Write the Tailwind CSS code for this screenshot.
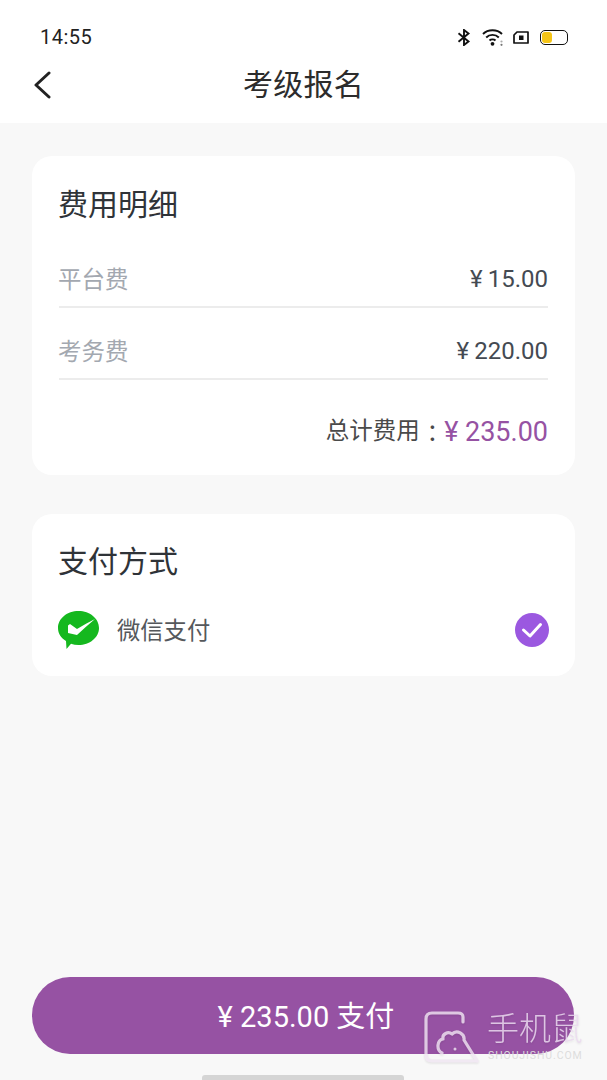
<!DOCTYPE html>
<html lang="zh">
<head>
<meta charset="utf-8">
<script src="https://cdn.jsdelivr.net/npm/@tailwindcss/browser@4"></script>
</head>
<body class="bg-[#f8f8f8]">
<div class="relative w-[607px] h-[1080px] overflow-hidden bg-[#f8f8f8] font-['Roboto','Noto_Sans_CJK_SC',sans-serif]">
  <header class="bg-white h-[123px] flex flex-col">
    <div class="h-[55px] pt-[25px] pl-[40px] pr-[39px] flex items-start justify-between">
      <span class="text-[20px] leading-[24px] tracking-[0.5px] text-[#222]">14:55</span>
      <div class="flex items-center h-[24px] pt-[1px]">
        <svg class="w-[14px] h-[17px]" viewBox="0 0 14 17" fill="none" stroke="#111" stroke-width="1.900"><path d="M1.500 4.200 L11.500 12.500 L7 16 V1 L11.500 4.500 L1.500 12.800"/></svg>
        <svg class="w-[22px] h-[17px] ml-[11px]" viewBox="0 0 22 17" fill="none" stroke="#111" stroke-width="1.900"><path d="M1 5 C6 0 15 0 20 5"/><path d="M4.200 8.500 C7.500 5 13.500 5 16.800 8.500"/><path d="M7.500 11.500 C9 10 12 10 13.500 11.500"/><circle cx="10.500" cy="14.800" r="1.900" fill="#111" stroke="none"/><circle cx="19.500" cy="12.500" r="1.100" fill="#aaa" stroke="none"/><circle cx="19.500" cy="15.800" r="1.100" fill="#777" stroke="none"/></svg>
        <svg class="w-[16px] h-[13px] ml-[9px]" viewBox="0 0 16 13" fill="none"><path d="M4 1 H15 V12 H1 V4 Z" stroke="#111" stroke-width="1.700" stroke-linejoin="round"/><rect x="6" y="4.500" width="4.500" height="4.500" fill="#111"/></svg>
        <div class="w-[28px] h-[15px] rounded-[5px] border-[1.800px] border-[#111] p-[1px] ml-[11px]"><div class="w-[10px] h-full rounded-[3px] bg-[#f5c518]"></div></div>
      </div>
    </div>
    <div class="relative h-[60px] flex items-center justify-center">
      <svg class="absolute left-[33px] top-[16px] w-[18px] h-[28px]" viewBox="0 0 18 28" fill="none" stroke="#222" stroke-width="3" stroke-linecap="round" stroke-linejoin="round"><path d="M16 2 L3 14 L16 26"/></svg>
      <h1 class="text-[30px] leading-[40px] tracking-[0.2px] text-[#2c2c2c] font-normal">考级报名</h1>
    </div>
  </header>

  <main class="px-[32px] pt-[33px] flex flex-col gap-[39px]">
    <section class="bg-white rounded-[20px] h-[319px] px-[27px] pt-[29px]">
      <h2 class="text-[30px] leading-[40px] font-normal text-[#2f3338] -ml-[1px]">费用明细</h2>
      <div class="mt-[30px] h-[53px] flex items-center justify-between border-b-2 border-[#ececec]">
        <span class="text-[23.500px] text-[#a3a8b0] -ml-[1px]">平台费</span>
        <span class="text-[24px] text-[#444a52] pb-[4px] pl-[1px]">¥<span class="ml-[5px]">15.00</span></span>
      </div>
      <div class="mt-[19px] h-[53px] flex items-center justify-between border-b-2 border-[#ececec]">
        <span class="text-[23.500px] text-[#a3a8b0] -ml-[1px]">考务费</span>
        <span class="text-[24px] text-[#444a52] pb-[4px] pl-[1px]">¥<span class="ml-[5px]">220.00</span></span>
      </div>
      <div class="mt-[32px] flex items-center justify-end h-[40px]">
        <span class="text-[23.500px] text-[#4a4a4a] mr-[1px]">总计费用</span><span class="text-[23.300px] text-[#4a4a4a] font-['Noto_Sans_CJK_TC']">：</span><span class="text-[27px] text-[#9652a3]">¥ 235.00</span>
      </div>
    </section>
    <section class="bg-white rounded-[20px] h-[162px] px-[27px] pt-[28px]">
      <h2 class="text-[30px] leading-[40px] font-normal text-[#2f3338] -ml-[1px]">支付方式</h2>
      <div class="mt-[27px] flex items-center justify-between h-[42px]">
        <div class="flex items-center gap-[18px]">
          <svg class="w-[41px] h-[38px] -ml-[1px]" viewBox="0 0 41 38"><path d="M20.500 0 C31.800 0 41 7.500 41 17 C41 26.500 31.800 34 20.500 34 C17.800 34 15.300 33.600 13 32.800 L8.500 38 L8 30 C3 27 0 22.500 0 17 C0 7.500 9.200 0 20.500 0 Z" fill="#15b81f"/><path d="M10 14.500 L12 13 L19 18 C25 14.500 31 11 37 8 C31 13 25 18.500 19 24 L10 22 Z" fill="#fff"/></svg>
          <span class="text-[23.300px] text-[#55585c] pt-[3px]">微信支付</span>
        </div>
        <div class="w-[34px] h-[34px] rounded-full bg-[#9b58e0] flex items-center justify-center -mr-[1px]">
          <svg class="w-[24px] h-[24px]" viewBox="0 0 24 24" fill="none" stroke="#fff" stroke-width="3" stroke-linecap="round" stroke-linejoin="round"><path d="M3.500 12 L10 18 L20.500 6.500"/></svg>
        </div>
      </div>
    </section>
  </main>

  <button class="absolute left-[32px] top-[977px] w-[542px] h-[77px] rounded-[38px] bg-[#9652a3] text-white text-[29px] pt-[4px] pl-[6px] flex items-center justify-center">¥ 235.00 支付</button>
  <div class="absolute left-[202px] top-[1075px] w-[202px] h-[5px] rounded-t-[3px] bg-[#d5d5d5]"></div>

  <div class="absolute left-[424px] top-[1010px] w-[56px] h-[54px] opacity-80 drop-shadow-[0_1px_1px_rgba(0,0,0,0.12)]">
    <svg class="w-full h-full" viewBox="0 0 56 54" fill="none" stroke="#f0e6f2" stroke-width="3.200" stroke-linecap="round" stroke-linejoin="round"><path d="M39 12 V7 Q39 3 34 3 H8 Q2 3 2 9 V45 Q2 51 8 51 H53"/><path d="M53 51 L40 30 C41 24 33 19 28 24 C24 21 18 24 19 29 C13 30 12 40 18 43"/><circle cx="31" cy="39" r="1.500" fill="#f0e6f2" stroke="none"/></svg>
  </div>
  <div class="absolute left-[487px] top-[1010px] text-[32px] leading-[38px] text-[#ead9ee]/85 whitespace-nowrap font-light drop-shadow-[0_1px_1px_rgba(0,0,0,0.1)]">手机鼠</div>
  <div class="absolute left-[488px] top-[1050px] text-[10.500px] leading-[12px] tracking-[0.900px] text-[#dddddd] whitespace-nowrap">SHOUJISHU.COM</div>
</div>
</body>
</html>
